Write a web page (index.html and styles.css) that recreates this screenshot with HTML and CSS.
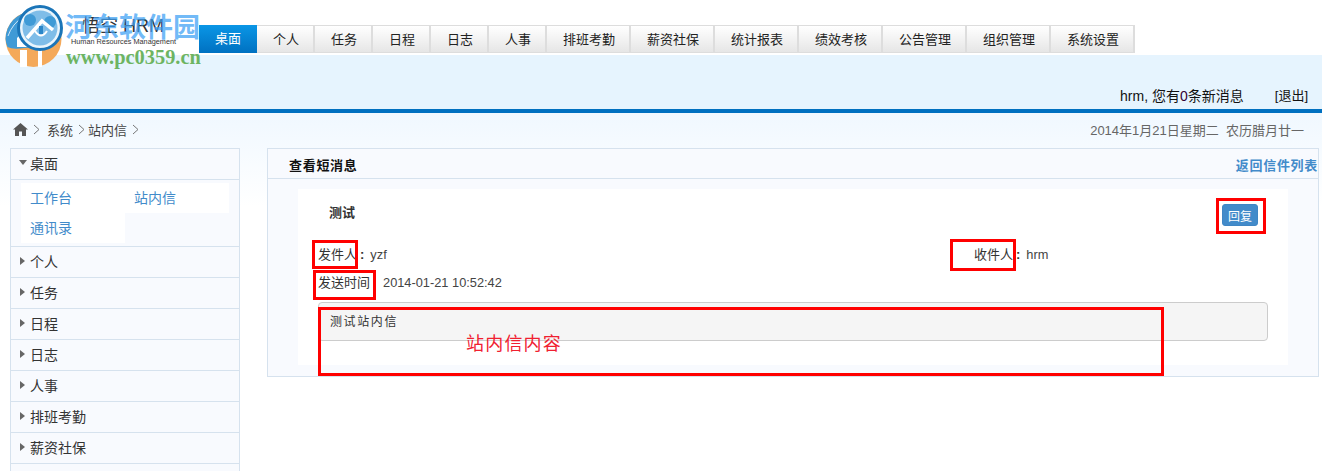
FILE: index.html
```html
<!DOCTYPE html>
<html lang="zh-CN">
<head>
  <meta charset="UTF-8" />
  <title>悟空 HRM</title>
  <link rel="stylesheet" href="styles.css">
</head>
<body>
  <div class="top">
    <div class="logo">
      <svg class="logo-mark" width="70" height="70" viewBox="0 0 70 70">
        <circle cx="33.5" cy="39" r="28" fill="#f4a95a"/>
        <path d="M20 50 H27 V67 H20Z M38 48 H42 V67 H38Z" fill="#fff"/>
        <path d="M5.5 39 A28 28 0 0 1 61 34 Q47 47 24 48 Q13 50 7.5 47 A28 28 0 0 1 5.5 39Z" fill="#3f9ad6"/>
        <path d="M8 36 Q12 24 24 16" fill="none" stroke="#cfe6f6" stroke-width="1"/>
        <path d="M17 47 V38 L24 31 L31 38 V47Z" fill="#fff"/>
        <circle cx="40" cy="28" r="21.5" fill="#eaf5fc" stroke="#1b75b8" stroke-width="3"/>
        <circle cx="40" cy="28" r="17.5" fill="#7fbde8"/>
        <circle cx="30" cy="20" r="6" fill="#3f9ad6"/>
        <circle cx="50" cy="22" r="6" fill="#3f9ad6"/>
        <path d="M27 38 L42 21 L53 30" fill="none" stroke="#fff" stroke-width="3.5"/>
        <path d="M35 31 Q41 40 47 31" fill="none" stroke="#fff" stroke-width="2"/>
        <path d="M39 26 H43 V34 H39Z" fill="#2b86c8"/>
      </svg>
      <div class="logo-name">悟空 HRM</div>
      <div class="logo-sub">Human Resources Management</div>
      <div class="mark-cn">河东软件园</div>
      <div class="mark-url">www.pc0359.cn</div>
    </div>
    <ul class="tabs">
      <li class="tab active">桌面</li>
      <li class="tab">个人</li>
      <li class="tab">任务</li>
      <li class="tab">日程</li>
      <li class="tab">日志</li>
      <li class="tab">人事</li>
      <li class="tab wide">排班考勤</li>
      <li class="tab wide">薪资社保</li>
      <li class="tab wide">统计报表</li>
      <li class="tab wide">绩效考核</li>
      <li class="tab wide">公告管理</li>
      <li class="tab wide">组织管理</li>
      <li class="tab wide">系统设置</li>
    </ul>
  </div>

  <div class="band">
    <span>hrm, 您有<span class="count">0</span>条新消息</span>
    <a class="logout">[退出]</a>
  </div>

  <div class="page">
    <div class="crumbs">
      <div class="path">
        <svg class="home" width="15" height="13" viewBox="0 0 15 13">
          <path d="M7.5 0 L15 6.5 L13 6.5 L13 13 L9 13 L9 8.5 L6 8.5 L6 13 L2 13 L2 6.5 L0 6.5Z" fill="#555"/>
        </svg>
        <svg class="sep" width="7" height="11" viewBox="0 0 7 11"><path d="M1 1 L6 5.5 L1 10"/></svg>
        <span>系统</span>
        <svg class="sep" width="7" height="11" viewBox="0 0 7 11"><path d="M1 1 L6 5.5 L1 10"/></svg>
        <span>站内信</span>
        <svg class="sep" width="7" height="11" viewBox="0 0 7 11"><path d="M1 1 L6 5.5 L1 10"/></svg>
      </div>
      <div class="date">2014年1月21日星期二&nbsp;&nbsp;农历腊月廿一</div>
    </div>

    <div class="content">
      <div class="side">
        <div class="side-head"><i class="arrow-down"></i>桌面</div>
        <div class="side-links">
          <a>工作台</a>
          <a>站内信</a>
          <a>通讯录</a>
        </div>
        <div class="side-head"><i class="arrow-right"></i>个人</div>
        <div class="side-head"><i class="arrow-right"></i>任务</div>
        <div class="side-head"><i class="arrow-right"></i>日程</div>
        <div class="side-head"><i class="arrow-right"></i>日志</div>
        <div class="side-head"><i class="arrow-right"></i>人事</div>
        <div class="side-head"><i class="arrow-right"></i>排班考勤</div>
        <div class="side-head"><i class="arrow-right"></i>薪资社保</div>
        <div class="side-tail"></div>
      </div>

      <div class="panel">
        <div class="panel-head">
          <strong>查看短消息</strong>
          <a class="back">返回信件列表</a>
        </div>
        <div class="msg">
          <div class="msg-title">
            <strong>测试</strong>
            <button class="reply">回复</button>
          </div>
          <div class="msg-row">
            <div class="from"><span>发件人</span><b>:</b><em>yzf</em></div>
            <div class="to"><span>收件人</span><b>:</b><em>hrm</em></div>
          </div>
          <div class="msg-row time"><span>发送时间</span><em>2014-01-21 10:52:42</em></div>
          <div class="well">测试站内信</div>
          <!-- red markup drawn on top of the shot -->
          <div class="mark mark-reply"></div>
          <div class="mark mark-from"></div>
          <div class="mark mark-to"></div>
          <div class="mark mark-time"></div>
          <div class="mark mark-body"></div>
          <div class="mark-text">站内信内容</div>
        </div>
      </div>
    </div>
  </div>
</body>
</html>
```

FILE: styles.css
```css
html {
  overflow: hidden;
}
body {
  margin: 0;
  font-family: "Liberation Sans", Arial, "Noto Sans CJK SC", sans-serif;
  font-size: 13px;
  color: #333;
  background: #fff;
}
a {
  cursor: pointer;
}
em {
  font-style: normal;
}

/* top bar */
.top {
  height: 55px;
  display: flex;
  background: #fff;
}
.logo {
  position: relative;
  width: 199px;
  flex-shrink: 0;
}
.logo-mark {
  position: absolute;
  left: 0;
  top: 0;
}
.logo-name {
  position: absolute;
  left: 82px;
  top: 15px;
  font-size: 18px;
  line-height: 22px;
  color: #333;
  white-space: nowrap;
}
.logo-sub {
  position: absolute;
  left: 71px;
  top: 38px;
  font-size: 7.3px;
  line-height: 8px;
  color: #333;
  white-space: nowrap;
}
.mark-cn {
  position: absolute;
  left: 65px;
  top: 12px;
  font-size: 27px;
  line-height: 32px;
  font-weight: bold;
  color: rgba(60, 160, 245, 0.72);
  white-space: nowrap;
}
.mark-url {
  position: absolute;
  left: 66px;
  top: 46px;
  font-family: "Liberation Serif", serif;
  font-size: 20.4px;
  line-height: 22px;
  font-weight: bold;
  color: #6db462;
  white-space: nowrap;
  z-index: 1;
}
.tabs {
  display: flex;
  list-style: none;
  margin: 25px 0 0;
  padding: 0;
  height: 28px;
}
.tab {
  box-sizing: border-box;
  width: 58px;
  height: 28px;
  padding-left: 2px;
  line-height: 27px;
  text-align: center;
  color: #222;
  background: linear-gradient(#fff, #e6e6e6);
  border: 1px solid #ddd;
  border-left-width: 0;
  border-right-width: 2px;
}
.tab.wide {
  width: 84px;
}
.tab.active {
  padding-left: 0;
  color: #fff;
  border: 0;
  line-height: 28px;
  background: linear-gradient(#0a96e6, #0071c1);
}

.band {
  box-sizing: border-box;
  height: 58px;
  padding: 33px 14px 0 0;
  display: flex;
  justify-content: flex-end;
  gap: 31px;
  line-height: 16px;
  font-size: 14px;
  color: #111;
  background: #e6f4fe;
  border-bottom: 4px solid #0070c0;
}
.count {
  color: #303;
}
.logout {
  font-size: 13px;
}

/* breadcrumb + columns */
.page {
  padding: 0 3px 0 10px;
  background: linear-gradient(#f0f8ff, #fff 94px) no-repeat;
}
.crumbs {
  box-sizing: border-box;
  height: 35px;
  padding: 0 15px 2px 3px;
  display: flex;
  justify-content: space-between;
  align-items: center;
}
.path {
  display: flex;
  align-items: center;
  color: #444;
}
.sep {
  margin: 0 3px 0 5px;
  fill: none;
  stroke: #777;
  stroke-width: 1;
}
.home + .sep {
  margin-right: 7px;
}
.date {
  color: #666;
}
.content {
  display: flex;
  align-items: flex-start;
  gap: 27px;
}

/* sidebar */
.side {
  box-sizing: border-box;
  width: 230px;
  flex-shrink: 0;
  background: #f8fafe;
  border: 1px solid #d6e2ee;
  border-bottom: 0;
}
.side-head {
  box-sizing: border-box;
  height: 31px;
  line-height: 30px;
  padding-left: 9px;
  font-size: 14px;
  color: #333;
  border-bottom: 1px solid #d6e2ee;
  display: flex;
  align-items: center;
  gap: 4px;
}
.side-tail {
  height: 8px;
}
.arrow-right {
  width: 0;
  height: 0;
  border-left: 5px solid #666;
  border-top: 4px solid transparent;
  border-bottom: 4px solid transparent;
  margin-bottom: 3px;
  margin-right: 1px;
}
.arrow-down {
  width: 0;
  height: 0;
  border-top: 5px solid #666;
  border-left: 4px solid transparent;
  border-right: 4px solid transparent;
  margin-bottom: 3px;
  margin-left: -1px;
  margin-right: -1px;
}
.side-links {
  display: grid;
  grid-template-columns: 104px 104px;
  grid-auto-rows: 30px;
  padding: 3px 0 3px 10px;
  border-bottom: 1px solid #d6e2ee;
}
.side-links a {
  padding-left: 9px;
  line-height: 30px;
  font-size: 14px;
  color: #428bca;
  background: #fff;
}

/* message panel */
.panel {
  box-sizing: border-box;
  width: 1052px;
  height: 229px;
  background: #f8fafe;
  border: 1px solid #d6e2ee;
}
.panel-head {
  box-sizing: border-box;
  height: 30px;
  display: flex;
  justify-content: space-between;
  align-items: center;
  padding: 2px 0 0 21px;
  border-bottom: 1px solid #d6e2ee;
  color: #111;
  letter-spacing: 0.7px;
}
.back {
  font-weight: bold;
  color: #428bca;
}
.msg {
  position: relative;
  box-sizing: border-box;
  width: 990px;
  height: 176px;
  margin: 10px 0 0 30px;
  padding: 0 20px;
  background: #fff;
}
.msg-title {
  display: flex;
  justify-content: space-between;
  height: 52px;
  padding: 15px 10px 0 11px;
  box-sizing: border-box;
}
.msg-title strong {
  margin-top: -2px;
}
.reply {
  width: 36px;
  height: 22px;
  padding: 0;
  font: inherit;
  font-size: 12px;
  color: #fff;
  background: #428bca;
  border: 1px solid #3f86c4;
  border-radius: 3px;
}
.msg-row {
  display: flex;
  height: 28px;
  line-height: 28px;
}
.from {
  width: 657px;
  display: flex;
}
.to {
  display: flex;
  margin-left: -1px;
}
.msg-row b {
  margin: 0 6px 0 3px;
}
.msg-row em {
  font-size: 12.8px;
  color: #444;
}
.time {
  gap: 13px;
  margin-bottom: 5px;
}
.well {
  box-sizing: border-box;
  width: 950px;
  height: 39px;
  padding: 10px 11px;
  font-size: 12px;
  line-height: 18px;
  letter-spacing: 1.6px;
  background: #f5f5f5;
  border: 1px solid #ccc;
  border-radius: 4px;
}

/* annotations, coordinates are relative to .msg */
.mark {
  position: absolute;
  box-sizing: border-box;
  border: 3px solid #f00;
}
.mark-reply {
  left: 918px;
  top: 9px;
  width: 50px;
  height: 36px;
}
.mark-from {
  left: 14px;
  top: 51px;
  width: 46px;
  height: 29px;
}
.mark-to {
  left: 652px;
  top: 50px;
  width: 66px;
  height: 32px;
}
.mark-time {
  left: 15px;
  top: 81px;
  width: 63px;
  height: 30px;
}
.mark-body {
  left: 20px;
  top: 118px;
  width: 846px;
  height: 69px;
}
.mark-text {
  position: absolute;
  left: 168px;
  top: 143px;
  font-size: 18px;
  line-height: 24px;
  letter-spacing: 1.2px;
  color: #f02030;
}
```
